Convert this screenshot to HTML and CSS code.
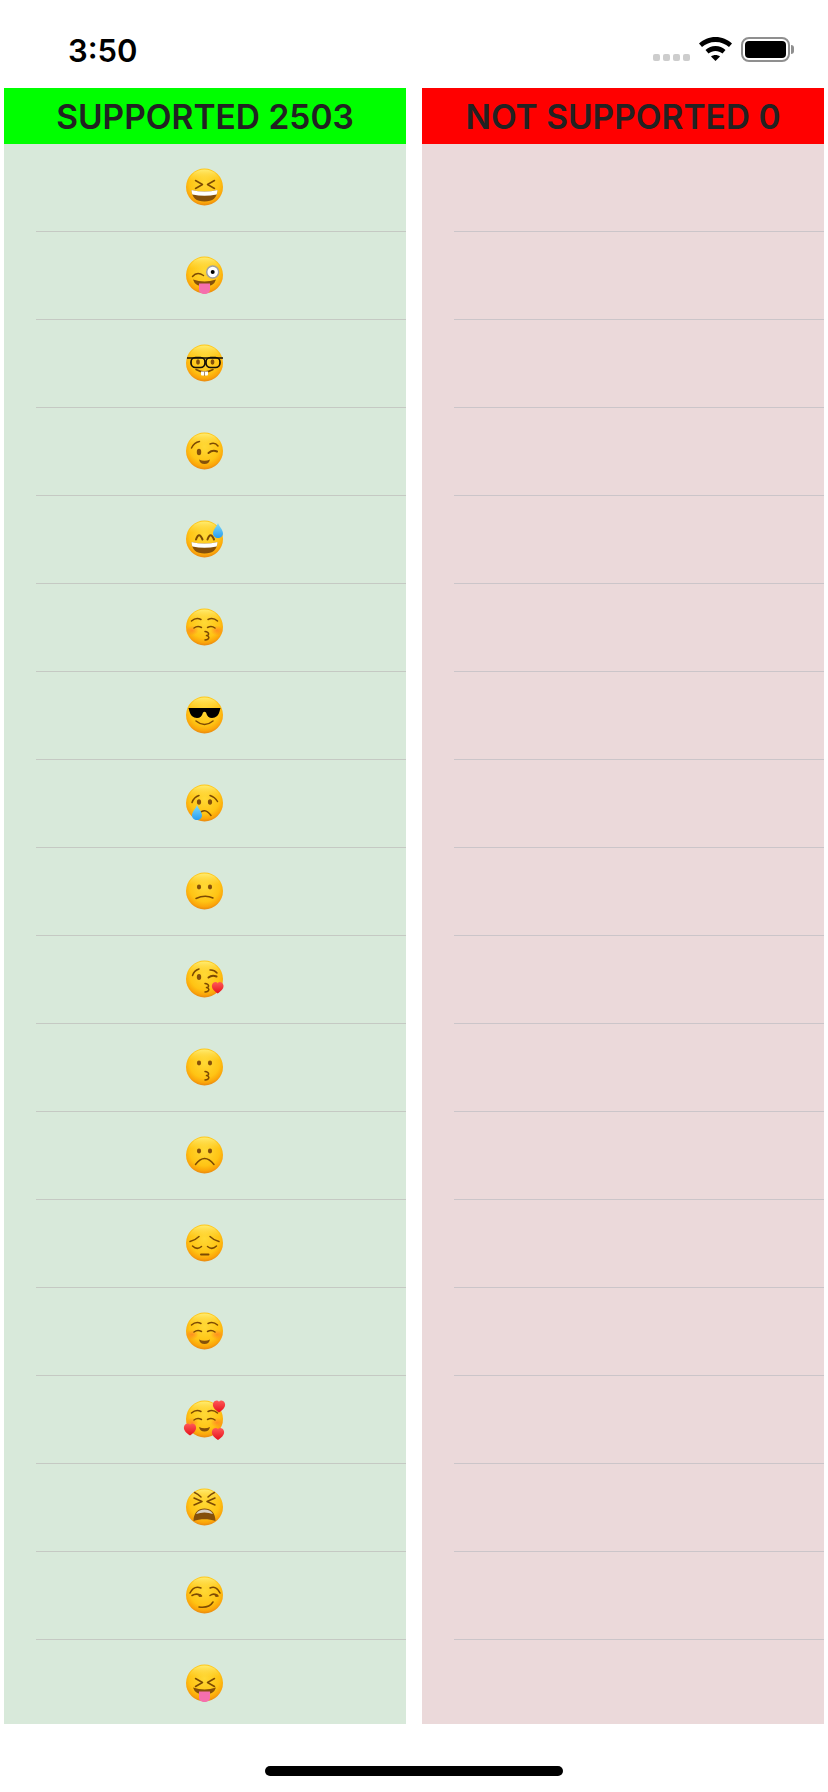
FILE: index.html
```html
<!DOCTYPE html>
<html lang="en">
<head>
<meta charset="utf-8">
<title>Emoji support</title>
<link rel="stylesheet" href="styles.css">
</head>
<body>
<svg class="defs" aria-hidden="true">
  <defs>
    <radialGradient id="faceG" cx="50%" cy="38%" r="62%">
      <stop offset="0" stop-color="#ffd936"/>
      <stop offset=".66" stop-color="#ffc414"/>
      <stop offset=".88" stop-color="#fba50a"/>
      <stop offset="1" stop-color="#e88810"/>
    </radialGradient>
    <linearGradient id="topG" x1="0" y1="0" x2="0" y2="1">
      <stop offset="0" stop-color="#fff07a" stop-opacity=".9"/>
      <stop offset=".32" stop-color="#ffe050" stop-opacity="0"/>
    </linearGradient>
    <radialGradient id="blushG">
      <stop offset="0" stop-color="#ff5a2c" stop-opacity=".5"/>
      <stop offset="1" stop-color="#ff5a2c" stop-opacity="0"/>
    </radialGradient>
    <linearGradient id="dropG" x1="0" y1="0" x2="0" y2="1">
      <stop offset="0" stop-color="#7fdcfb"/>
      <stop offset="1" stop-color="#2a9ef0"/>
    </linearGradient>
    <linearGradient id="heartG" x1="0" y1="0" x2="0" y2="1">
      <stop offset="0" stop-color="#ff5a58"/>
      <stop offset="1" stop-color="#e6101c"/>
    </linearGradient>
    <g id="face">
      <circle cx="21.5" cy="22" r="18.5" fill="url(#faceG)"/>
      <circle cx="21.5" cy="22" r="17.5" fill="url(#topG)"/>
    </g>
    <path id="heart" fill="url(#heartG)" d="M6 12C.8 8.6-.5 5.8 0 3.2.5.9 2.4-.2 4-.1 5.2 0 5.9.8 6 1.6 6.1.8 6.8 0 8-.1 9.6-.2 11.5.9 12 3.2 12.5 5.8 11.2 8.6 6 12Z"/>
    <path id="drop" fill="url(#dropG)" d="M5 0C6 3.5 10 6.5 10 10.5 10 13.2 7.8 15 5 15 2.2 15 0 13.2 0 10.5 0 6.5 4 3.5 5 0Z"/>
    <g id="blush">
      <ellipse cx="9" cy="25.5" rx="6.5" ry="5" fill="url(#blushG)"/>
      <ellipse cx="34" cy="25.5" rx="6.5" ry="5" fill="url(#blushG)"/>
    </g>
    <g id="laugh">
      <path class="brown" d="M8.5 25Q21.5 28 34.5 25 34 36.5 21.5 36.5 9 36.5 8.5 25Z"/>
      <path class="white" d="M8.5 25Q21.5 28 34.5 25 34.6 27.6 33.6 29.6 21.5 32 9.4 29.6 8.4 27.6 8.5 25Z"/>
    </g>
    <g id="tongueMouth">
      <path class="brown" d="M10 26.5Q21.5 30.5 33 26.5 31 33.5 21.5 33.5 12 33.5 10 26.5Z"/>
      <path class="pink" d="M16 30.5H27V36.5C27 39.5 24.5 41 21.5 41 18.5 41 16 39.5 16 36.5Z"/>
    </g>
    <g id="squint">
      <path class="line" d="M12.5 15.5 19.5 19.5 12.5 23.5"/>
      <path class="line" d="M31.5 15.5 24.5 19.5 31.5 23.5"/>
    </g>
    <g id="dots">
      <ellipse class="brown" cx="16" cy="18" rx="2.1" ry="2.4"/>
      <ellipse class="brown" cx="27" cy="18" rx="2.1" ry="2.4"/>
    </g>
    <path id="kiss" class="line" d="M22 26.5C26.5 27 26.5 30.3 23.5 30.6 26.8 31 26.8 34.6 22 35"/>
    <g id="calm">
      <path class="line" d="M8.5 16Q13 12 18 14.5"/>
      <path class="line" d="M25 14.5Q30 12 34.5 16"/>
      <path class="line" d="M11 23Q14.5 20.5 18.5 22.5"/>
      <path class="line" d="M24.5 22.5Q28.5 20.5 32 23"/>
    </g>
  </defs>
</svg>

<header class="status">
  <span class="time">3:50</span>
  <div class="status-icons">
    <div class="signal"><i></i><i></i><i></i><i></i></div>
    <svg class="wifi" viewBox="0 0 33 24" aria-hidden="true">
      <path d="M16.5 0C23 0 28.5 2.5 33 6.5L30 10C26.5 7 22 5 16.5 5 11 5 6.5 7 3 10L0 6.5C4.5 2.5 10 0 16.5 0Z"/>
      <path d="M16.5 9C20.5 9 23.5 10.5 26.5 13L23.5 16.5C21.5 15 19 14 16.5 14 14 14 11.5 15 9.5 16.5L6.5 13C9.5 10.5 12.5 9 16.5 9Z"/>
      <path d="M16.5 18C18.2 18 19.8 18.5 21 19.5L16.5 24 12 19.5C13.2 18.5 14.8 18 16.5 18Z"/>
    </svg>
    <div class="battery"><div class="battery-body"><div class="battery-level"></div></div><div class="battery-nub"></div></div>
  </div>
</header>

<main class="columns">
  <section class="column column-ok">
    <h2 class="title title-ok">SUPPORTED 2503</h2>
    <ul class="list">
      <li class="row"><svg class="emoji" viewBox="0 0 44 44" role="img" aria-label="😆"><use href="#face"/><use href="#squint"/><use href="#laugh"/></svg></li>
      <li class="row"><svg class="emoji" viewBox="0 0 44 44" role="img" aria-label="😜"><use href="#face"/><path class="line" d="M9.5 23.5Q14 18 20.5 22.5"/><circle class="ring" cx="29.7" cy="19" r="6"/><circle class="black" cx="29.7" cy="19" r="2"/><use href="#tongueMouth"/></svg></li>
      <li class="row"><svg class="emoji" viewBox="0 0 44 44" role="img" aria-label="🤓"><use href="#face"/><ellipse class="brown" cx="15" cy="21" rx="1.9" ry="2.7"/><ellipse class="brown" cx="29.5" cy="21" rx="1.9" ry="2.7"/><rect class="frame" x="8" y="16.5" width="14" height="10" rx="4.5"/><rect class="frame" x="23" y="16.5" width="14" height="10" rx="4.5"/><path class="frame" d="M4 17H40"/><path class="line" d="M13 28.5Q21.5 33.5 30 28.5"/><path class="white" d="M18 30.5H25V33.5Q25 34.5 24 34.5H19Q18 34.5 18 33.5Z"/><path class="line thin" d="M21.5 31V34.5"/></svg></li>
      <li class="row"><svg class="emoji" viewBox="0 0 44 44" role="img" aria-label="😉"><use href="#face"/><path class="line" d="M8.5 19Q11 13.500 16.500 12.500"/><path class="line" d="M27 15Q32 13 35 17"/><ellipse class="brown" cx="16" cy="23" rx="2.2" ry="3.3"/><path class="line wide" d="M25.500 24Q29.500 20.500 34 22.500"/><path class="brown" d="M16 30.500Q21.500 33 27 30.500 26 35 21.500 35 17 35 16 30.500Z"/></svg></li>
      <li class="row"><svg class="emoji" viewBox="0 0 44 44" role="img" aria-label="😅"><use href="#face"/><path class="line wide" d="M13 22.500Q16 14 19.500 22.500"/><path class="line wide" d="M24.500 22.500Q27.500 14 31 22.500"/><use href="#laugh"/><use href="#drop" x="30" y="6"/></svg></li>
      <li class="row"><svg class="emoji" viewBox="0 0 44 44" role="img" aria-label="😚"><use href="#face"/><use href="#blush"/><use href="#calm"/><use href="#kiss"/></svg></li>
      <li class="row"><svg class="emoji" viewBox="0 0 44 44" role="img" aria-label="😎"><use href="#face"/><path class="black" d="M5.500 15H37.500L36.500 18.500Q35 25 29 25 24.500 25 23 19.500 21.500 18 20 19.500 18.500 25 14 25 8 25 6.500 18.500Z"/><path class="line" d="M13 28Q21.500 35 30 28"/></svg></li>
      <li class="row"><svg class="emoji" viewBox="0 0 44 44" role="img" aria-label="😢"><use href="#face"/><path class="line" d="M9 21.500Q11 16 16 14.500"/><path class="line" d="M27 14.500Q32 16 34.500 20.500"/><ellipse class="brown" cx="16" cy="21" rx="2.100" ry="2.800"/><ellipse class="brown" cx="27" cy="21" rx="2.100" ry="2.800"/><path class="line" d="M15.500 33.500Q21.500 25.500 28 34.500"/><use href="#drop" x="9" y="24"/></svg></li>
      <li class="row"><svg class="emoji" viewBox="0 0 44 44" role="img" aria-label="😕"><use href="#face"/><use href="#dots"/><path class="line" d="M13 29.500Q22 25.500 30 29"/></svg></li>
      <li class="row"><svg class="emoji" viewBox="0 0 44 44" role="img" aria-label="😘"><use href="#face"/><path class="line" d="M9.500 18.500Q11 13.500 16 12"/><ellipse class="brown" cx="16" cy="20" rx="2.200" ry="3"/><path class="line" d="M27 13Q31 12.500 34 16"/><path class="line wide" d="M25.500 20.500Q29 17.500 33.500 19.500"/><use href="#kiss"/><use href="#heart" transform="translate(29 25) scale(.95)"/></svg></li>
      <li class="row"><svg class="emoji" viewBox="0 0 44 44" role="img" aria-label="😗"><use href="#face"/><use href="#dots"/><use href="#kiss"/></svg></li>
      <li class="row"><svg class="emoji" viewBox="0 0 44 44" role="img" aria-label="☹️"><use href="#face"/><use href="#dots"/><path class="line" d="M12.500 31.500Q21.500 19.500 31 31.500"/></svg></li>
      <li class="row"><svg class="emoji" viewBox="0 0 44 44" role="img" aria-label="😔"><use href="#face"/><path class="line" d="M7 20.500Q12 19.500 16 15.500"/><path class="line" d="M27 15.500Q31 19.500 36 20.500"/><path class="line" d="M9.500 25Q14 29.500 18.500 25.500"/><path class="line" d="M24.500 25.500Q29 29.500 33.500 25"/><path class="line wide" d="M18 33.500H25.500"/></svg></li>
      <li class="row"><svg class="emoji" viewBox="0 0 44 44" role="img" aria-label="☺️"><use href="#face"/><use href="#blush"/><use href="#calm"/><path class="brown" d="M16 30.500Q21.500 33 27 30.500 26 35 21.500 35 17 35 16 30.500Z"/></svg></li>
      <li class="row"><svg class="emoji" viewBox="0 0 44 44" role="img" aria-label="🥰"><use href="#face"/><use href="#blush"/><use href="#calm"/><path class="brown" d="M16 30Q21.500 32.500 27 30 26 34.500 21.500 34.500 17 34.500 16 30Z"/><use href="#heart" x="30" y="3.500"/><use href="#heart" x="1" y="26.500"/><use href="#heart" x="29" y="31"/></svg></li>
      <li class="row"><svg class="emoji" viewBox="0 0 44 44" role="img" aria-label="😫"><use href="#face"/><path class="line" d="M11.500 7.500Q15 9 18 12"/><path class="line" d="M31.500 7.500Q28 9 25 12"/><path class="line" d="M11 13 19 16.500 11 20"/><path class="line" d="M32 13 24 16.500 32 20"/><path class="brown" d="M10.500 36C10.500 28 15 23.500 21.500 23.500 28 23.500 32.500 28 32.500 36 26 33.500 17 33.500 10.500 36Z"/><path class="tan" d="M13 29C15 25.500 18 24.500 21.500 24.500 25 24.500 28 25.500 30 29 24.500 27 18.500 27 13 29Z"/></svg></li>
      <li class="row"><svg class="emoji" viewBox="0 0 44 44" role="img" aria-label="😏"><use href="#face"/><path class="line" d="M7 20Q11 12 18 15"/><path class="line" d="M27 15Q33 12 37 20"/><path class="line" d="M9 22.500Q14 19.500 18.500 23"/><path class="line" d="M27 22.500Q31 19.500 35 23"/><circle class="brown" cx="17" cy="22.500" r="1.600"/><circle class="brown" cx="33.500" cy="22.500" r="1.600"/><path class="line" d="M16 34Q26 35.500 30 29"/></svg></li>
      <li class="row"><svg class="emoji" viewBox="0 0 44 44" role="img" aria-label="😝"><use href="#face"/><use href="#squint" y="2"/><use href="#tongueMouth"/></svg></li>
    </ul>
  </section>

  <section class="column column-no">
    <h2 class="title title-no">NOT SUPPORTED 0</h2>
    <ul class="list">
      <li class="row"></li><li class="row"></li><li class="row"></li><li class="row"></li><li class="row"></li><li class="row"></li>
      <li class="row"></li><li class="row"></li><li class="row"></li><li class="row"></li><li class="row"></li><li class="row"></li>
      <li class="row"></li><li class="row"></li><li class="row"></li><li class="row"></li><li class="row"></li><li class="row"></li>
    </ul>
  </section>
</main>

<footer class="home"><div class="home-bar"></div></footer>
</body>
</html>
```

FILE: styles.css
```css
* {
  box-sizing: border-box;
}

html,
body {
  margin: 0;
  padding: 0;
  background: #fff;
}

html {
  height: 1792px;
  overflow: hidden;
}

body {
  display: flex;
  flex-direction: column;
  width: 828px;
  height: 1792px;
  overflow: hidden;
  font-family: Inter, "Liberation Sans", sans-serif;
}

.defs {
  position: absolute;
  width: 0;
  height: 0;
}

/* status bar */
.status {
  display: flex;
  justify-content: space-between;
  align-items: flex-start;
  height: 88px;
  padding: 37px 34px 0 68px;
}

.time {
  font-size: 31px;
  font-weight: 600;
  line-height: 27px;
  color: #000;
}

.status-icons {
  display: flex;
  align-items: flex-start;
}

.signal {
  display: flex;
  gap: 3px;
  margin: 17px 9px 0 0;
}

.signal i {
  display: block;
  width: 7px;
  height: 7px;
  border-radius: 2px;
  background: #cdcdcd;
}

.wifi {
  display: block;
  width: 33px;
  height: 24px;
  margin-right: 9px;
  fill: #000;
}

.battery {
  display: flex;
  align-items: center;
  gap: 1px;
}

.battery-body {
  width: 49px;
  height: 25px;
  padding: 2px;
  border: 2px solid #8f8f8f;
  border-radius: 8px;
}

.battery-level {
  height: 100%;
  border-radius: 4px;
  background: #000;
}

.battery-nub {
  width: 3px;
  height: 9px;
  border-radius: 0 3px 3px 0;
  background: #8f8f8f;
}

/* columns */
.columns {
  display: flex;
  gap: 16px;
  height: 1636px;
  padding: 0 4px;
}

.column {
  display: flex;
  flex-direction: column;
  flex: 1 1 0;
  min-width: 0;
  overflow: hidden;
}

.column-ok {
  background: #d8e9da;
  --sep: #c5c9c3;
}

.column-no {
  background: #ebd9da;
  --sep: #cbc5c9;
}

.title {
  flex: none;
  display: flex;
  align-items: center;
  justify-content: center;
  height: 56px;
  margin: 0;
  padding-top: 2px;
  font-size: 33.5px;
  font-weight: 600;
  color: #222;
}

.title-ok {
  background: #0f0;
}

.title-no {
  background: #f00;
}

.list {
  list-style: none;
  margin: 0;
  padding: 0;
}

.row {
  position: relative;
  display: flex;
  align-items: center;
  justify-content: center;
  height: 88px;
}

.row::after {
  content: "";
  position: absolute;
  left: 32px;
  right: 0;
  bottom: 0;
  height: 1px;
  background: var(--sep);
}

/* emoji artwork */
.emoji {
  display: block;
  width: 44px;
  height: 44px;
  margin-bottom: 2px;
  overflow: visible;
}

.line {
  fill: none;
  stroke: #7c4a03;
  stroke-width: 1.5;
  stroke-linecap: round;
  stroke-linejoin: round;
}

.line.wide {
  stroke-width: 2;
}

.line.thin {
  stroke-width: .6;
}

.brown {
  fill: #85500a;
}

.white {
  fill: #fff;
}

.pink {
  fill: #f56fae;
}

.black {
  fill: #000;
}

.tan {
  fill: #d9d2c5;
}

.ring {
  fill: #fff;
  stroke: #a0a0a0;
  stroke-width: 1.5;
}

.frame {
  fill: none;
  stroke: #15100a;
  stroke-width: 1.7;
  stroke-linejoin: round;
}

/* home indicator */
.home {
  flex: none;
  display: flex;
  justify-content: center;
  padding-top: 42px;
}

.home-bar {
  width: 298px;
  height: 10px;
  border-radius: 5px;
  background: #000;
}
```
